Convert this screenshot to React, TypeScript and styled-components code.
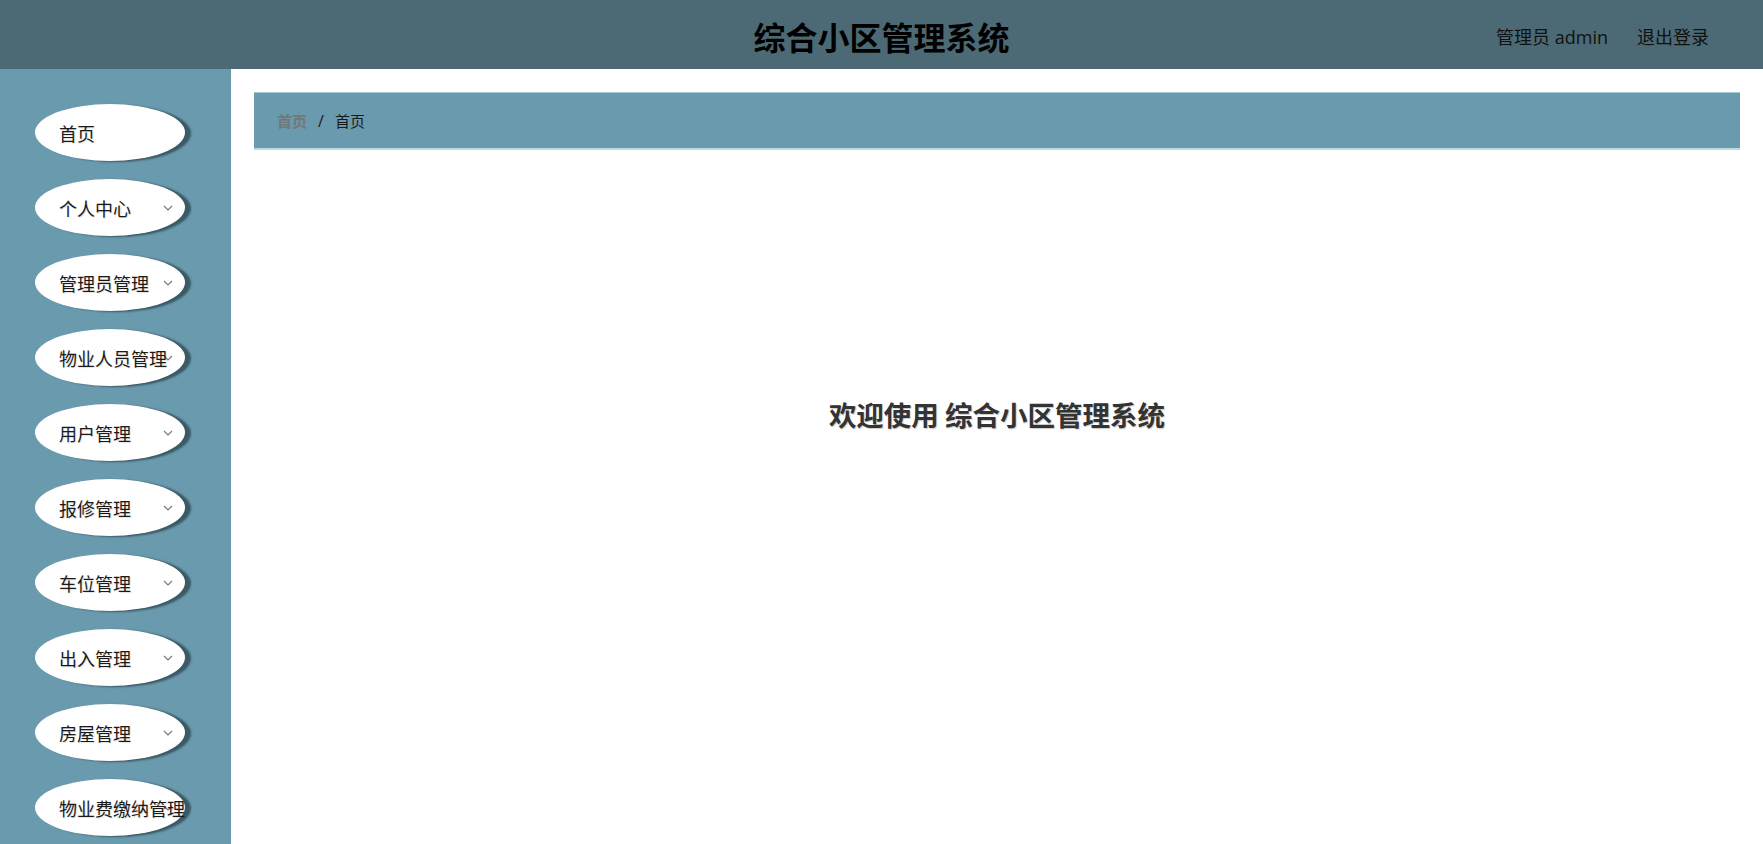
import * as React from 'react';
import styled, { createGlobalStyle } from 'styled-components';

const menuItems = [
  { label: '首页', children: false },
  { label: '个人中心', children: true },
  { label: '管理员管理', children: true },
  { label: '物业人员管理', children: true },
  { label: '用户管理', children: true },
  { label: '报修管理', children: true },
  { label: '车位管理', children: true },
  { label: '出入管理', children: true },
  { label: '房屋管理', children: true },
  { label: '物业费缴纳管理', children: true },
];

const GlobalStyle = createGlobalStyle`
  html, body {
    margin: 0;
    padding: 0;
    height: 100%;
    overflow: hidden;
  }
  body {
    font-family: 'Open Sans', 'Noto Sans CJK SC', sans-serif;
    background: #fff;
  }
`;

const Chevron: React.FC = () => (
  <svg width="10" height="6" viewBox="0 0 10 6" fill="none">
    <path d="M1 1l4 4 4-4" stroke="#777" strokeWidth="1.1" />
  </svg>
);

const App: React.FC = () => {
  return (
    <>
      <GlobalStyle />
      <Page>
        <Header>
          <Title>综合小区管理系统</Title>
          <UserBar>
            <UserLink>管理员 admin</UserLink>
            <UserLink>退出登录</UserLink>
          </UserBar>
        </Header>
        <Body>
          <Sidebar>
            {menuItems.map((item) => (
              <MenuItem key={item.label}>
                <MenuLabel>{item.label}</MenuLabel>
                {item.children && (
                  <ChevronWrap>
                    <Chevron />
                  </ChevronWrap>
                )}
              </MenuItem>
            ))}
          </Sidebar>
          <Main>
            <Breadcrumb>
              <CrumbFirst>首页</CrumbFirst>
              <CrumbSep>/</CrumbSep>
              <CrumbCurrent>首页</CrumbCurrent>
            </Breadcrumb>
            <Welcome>欢迎使用 综合小区管理系统</Welcome>
          </Main>
        </Body>
      </Page>
    </>
  );
};

const Page = styled.div`
  display: flex;
  flex-direction: column;
  width: 100%;
  height: 844px;
`;

const Header = styled.header`
  position: relative;
  display: flex;
  align-items: center;
  justify-content: center;
  height: 69px;
  flex-shrink: 0;
  background: #4c6a75;
`;

const Title = styled.h1`
  margin: 0;
  font-family: 'Noto Sans CJK SC', sans-serif;
  font-size: 32px;
  font-weight: 700;
  color: #000;
  line-height: 1;
  padding-top: 2px;
`;

const UserBar = styled.div`
  position: absolute;
  right: 54px;
  top: 0;
  height: 100%;
  display: flex;
  align-items: center;
  gap: 29px;
`;

const UserLink = styled.span`
  font-family: 'Open Sans', 'Noto Sans CJK SC', sans-serif;
  font-size: 18px;
  color: #111;
  padding-top: 2px;
`;

const Body = styled.div`
  display: flex;
  flex: 1;
  min-height: 0;
`;

const Sidebar = styled.nav`
  width: 231px;
  flex-shrink: 0;
  background: #6a9aad;
  box-sizing: border-box;
  padding: 35px 0 0 35px;
  display: flex;
  flex-direction: column;
  gap: 18px;
  overflow: hidden;
`;

const MenuItem = styled.div`
  position: relative;
  flex-shrink: 0;
  width: 150px;
  height: 57px;
  border-radius: 50%;
  background: #fff;
  box-shadow: 6px 1px 2px #3a5a66;
  display: flex;
  align-items: center;
  box-sizing: border-box;
  padding-left: 24px;
`;

const MenuLabel = styled.span`
  font-family: 'Noto Sans CJK SC', sans-serif;
  font-size: 18px;
  color: #1a1a1a;
  white-space: nowrap;
  text-shadow: 1px 1px 1px rgba(0, 0, 0, 0.12);
  position: relative;
  z-index: 1;
`;

const ChevronWrap = styled.span`
  position: absolute;
  left: 128px;
  top: 26px;
  display: flex;
`;

const Main = styled.main`
  flex: 1;
  box-sizing: border-box;
  padding: 23px 23px 0 23px;
  display: flex;
  flex-direction: column;
`;

const Breadcrumb = styled.div`
  height: 58px;
  box-sizing: border-box;
  background: #6a9aad;
  border-top: 1px solid #a9c9d6;
  border-bottom: 2px solid #bcd8e2;
  display: flex;
  align-items: center;
  padding-left: 23px;
  font-family: 'Noto Sans CJK SC', sans-serif;
  font-size: 15px;
`;

const CrumbFirst = styled.span`
  color: #727878;
  font-weight: 700;
`;

const CrumbSep = styled.span`
  margin: 0 11px;
  color: #1a1a1a;
  font-family: 'Open Sans', sans-serif;
  font-size: 16px;
`;

const CrumbCurrent = styled.span`
  color: #1a1a1a;
`;

const Welcome = styled.h2`
  margin: 249px 0 0;
  text-align: center;
  font-family: 'Noto Sans CJK SC', sans-serif;
  font-size: 27.5px;
  font-weight: 700;
  color: #333;
  line-height: 30px;
  text-shadow: 1px 1px 1px rgba(0, 0, 0, 0.2);
`;

export default App;
